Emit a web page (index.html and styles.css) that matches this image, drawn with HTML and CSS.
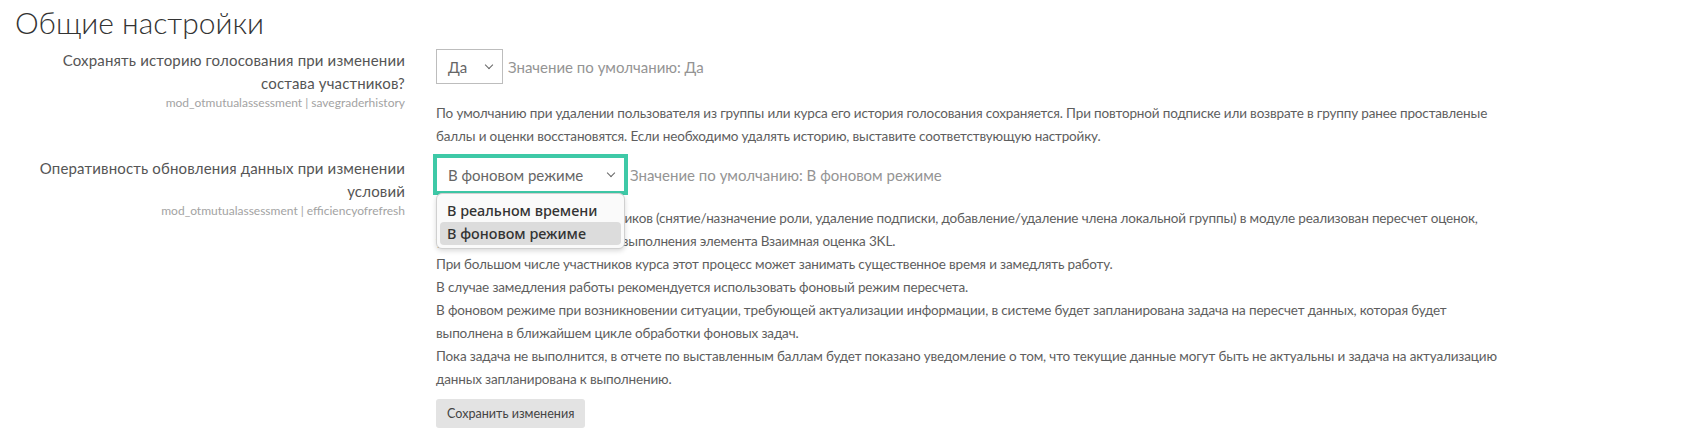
FILE: index.html
```html
<!DOCTYPE html>
<html lang="ru">
<head>
  <meta charset="UTF-8" />
  <title>Общие настройки</title>
  <link rel="stylesheet" href="styles.css">
</head>
<body>
  <h2 class="page-title">Общие настройки</h2>

  <div class="setting">
    <div class="setting-label">
      <label>Сохранять историю голосования при изменении состава участников?</label>
      <span class="setting-name">mod_otmutualassessment | savegraderhistory</span>
    </div>
    <div class="setting-body">
      <div class="setting-control">
        <div class="select select-short"><span>Да</span><i class="chev"></i></div>
        <span class="default-value">Значение по умолчанию: Да</span>
      </div>
      <div class="description">
        По умолчанию при удалении пользователя из группы или курса его история голосования сохраняется. При повторной подписке или возврате в группу ранее проставленые<br>
        баллы и оценки восстановятся. Если необходимо удалять историю, выставите соответствующую настройку.
      </div>
    </div>
  </div>

  <div class="setting">
    <div class="setting-label">
      <label>Оперативность обновления данных при изменении условий</label>
      <span class="setting-name">mod_otmutualassessment | efficiencyofrefresh</span>
    </div>
    <div class="setting-body">
      <div class="setting-control">
        <div class="select-wrap">
          <div class="select select-focus"><span>В фоновом режиме</span><i class="chev"></i></div>
          <ul class="dropdown">
            <li>В реальном времени</li>
            <li class="active">В фоновом режиме</li>
          </ul>
        </div>
        <span class="default-value">Значение по умолчанию: В фоновом режиме</span>
      </div>
      <div class="description description-tight">
        При изменении состава участников (снятие/назначение роли, удаление подписки, добавление/удаление члена локальной группы) в модуле реализован пересчет оценок,<br>
        учитывая изменения статусов выполнения элемента Взаимная оценка 3KL.<br>
        При большом числе участников курса этот процесс может занимать существенное время и замедлять работу.<br>
        В случае замедления работы рекомендуется использовать фоновый режим пересчета.<br>
        В фоновом режиме при возникновении ситуации, требующей актуализации информации, в системе будет запланирована задача на пересчет данных, которая будет<br>
        выполнена в ближайшем цикле обработки фоновых задач.<br>
        Пока задача не выполнится, в отчете по выставленным баллам будет показано уведомление о том, что текущие данные могут быть не актуальны и задача на актуализацию<br>
        данных запланирована к выполнению.
      </div>
      <button class="btn">Сохранить изменения</button>
    </div>
  </div>
</body>
</html>
```

FILE: styles.css
```css
:root{
  --font:"Lato","Open Sans",sans-serif;
  --text:#555;
  --desc:#5e5e5e;
  --muted:#949494;
  --small:#a3a3a3;
  --border:#bdbdbd;
  --focus:#3ec9a7;
}
*{box-sizing:border-box;}
body{
  margin:0;
  padding:0 15px;
  font-family:var(--font);
  font-size:15px;
  color:var(--text);
  background:#fff;
}
.page-title{
  margin:0;
  padding-top:4px;
  font-size:30px;
  font-weight:300;
  line-height:36px;
  color:#333;
}
.setting{
  display:grid;
  grid-template-columns:390px 1fr;
  column-gap:31px;
}
.setting-label{
  text-align:right;
  padding-top:9px;
}
.setting-label label{
  display:block;
  line-height:23px;
  letter-spacing:.16px;
}
.setting-name{
  display:block;
  font-size:12px;
  line-height:16px;
  color:var(--small);
}
.setting-body{ padding-top:9px; }
.setting-control{
  display:flex;
  align-items:center;
  gap:5px;
}
.select{
  height:35px;
  border:1px solid var(--border);
  display:flex;
  align-items:center;
  justify-content:space-between;
  padding:0 10px 0 11px;
  color:#666;
  background:#fff;
}
.select-short{ width:67px; }
.select-wrap{ position:relative; }
.select-focus{
  width:189px;
  border-color:var(--focus);
  box-shadow:0 0 0 3px var(--focus);
}
.chev{
  width:6px;
  height:6px;
  border-right:1px solid #666;
  border-bottom:1px solid #666;
  transform:rotate(45deg);
  margin-top:-4px;
}
.default-value{ color:var(--muted); }
.description{
  margin-top:18px;
  font-size:13.5px;
  letter-spacing:-.15px;
  line-height:23px;
  white-space:nowrap;
  color:var(--desc);
}
.description-tight{ margin-top:15px; }
.dropdown{
  position:absolute;
  left:0;
  top:36px;
  width:189px;
  margin:0;
  padding:5px 3px 3px;
  list-style:none;
  background:#fafafa;
  border:1px solid #d0d0d0;
  border-radius:6px;
  box-shadow:0 2px 5px rgba(0,0,0,.15);
  font-family:"Noto Sans",sans-serif;
  font-weight:500;
  font-size:14.4px;
  color:#333;
  z-index:5;
}
.dropdown li{
  padding:0 7px;
  line-height:23px;
  border-radius:4px;
}
.dropdown li.active{ background:#dcdcdc; }
.btn{
  margin-top:8px;
  padding:0 11px;
  height:29px;
  font-family:var(--font);
  font-size:12.6px;
  color:#444;
  background:#e3e3e3;
  border:none;
  border-radius:3px;
}
```
